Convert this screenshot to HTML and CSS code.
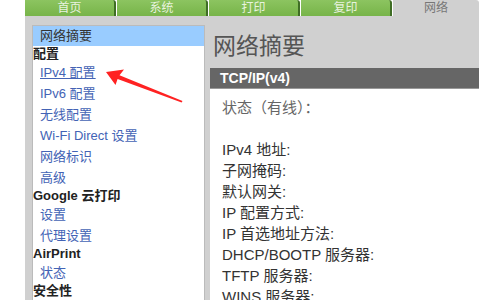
FILE: index.html
```html
<!DOCTYPE html>
<html lang="zh-CN">
<head>
    <meta charset="UTF-8">
    <meta name="viewport" content="width=device-width, initial-scale=1.0">
    <title>网络摘要</title>
    <link rel="stylesheet" href="styles.css">
</head>
<body>
    <div class="page">
        <div class="tabs">
            <div class="tab">首页</div>
            <div class="tab">系统</div>
            <div class="tab">打印</div>
            <div class="tab">复印</div>
            <div class="tab active">网络</div>
        </div>

        <div class="content">
            <div class="sidebar">
                <div class="nav-current">网络摘要</div>
                <div class="nav-head">配置</div>
                <a class="nav-link hover" href="#">IPv4 配置</a>
                <a class="nav-link" href="#">IPv6 配置</a>
                <a class="nav-link" href="#">无线配置</a>
                <a class="nav-link" href="#">Wi-Fi Direct 设置</a>
                <a class="nav-link" href="#">网络标识</a>
                <a class="nav-link" href="#">高级</a>
                <div class="nav-head">Google 云打印</div>
                <a class="nav-link" href="#">设置</a>
                <a class="nav-link" href="#">代理设置</a>
                <div class="nav-head">AirPrint</div>
                <a class="nav-link" href="#">状态</a>
                <div class="nav-head">安全性</div>
                <a class="nav-link" href="#">设置</a>
            </div>

            <div class="main">
                <h1 class="title">网络摘要</h1>
                <div class="section-bar">TCP/IP(v4)</div>
                <div class="panel">
                    <div class="row muted">状态（有线）：</div>
                    <div class="row">&nbsp;</div>
                    <div class="row">IPv4 地址:</div>
                    <div class="row">子网掩码:</div>
                    <div class="row">默认网关:</div>
                    <div class="row">IP 配置方式:</div>
                    <div class="row">IP 首选地址方法:</div>
                    <div class="row">DHCP/BOOTP 服务器:</div>
                    <div class="row">TFTP 服务器:</div>
                    <div class="row">WINS 服务器:</div>
                </div>
            </div>
        </div>
    </div>

    <!-- annotation arrow pointing at the IPv4 link -->
    <svg class="arrow" width="500" height="300" viewBox="0 0 500 300">
        <polygon points="106,72 124,69.5 119.5,75.2 182.5,101 181.6,102.6 117.6,79 115.5,85" fill="#f22"/>
    </svg>
</body>
</html>
```

FILE: styles.css
```css
body { margin: 0; background: #fff; font-family: "Liberation Sans", "Noto Sans CJK SC", sans-serif; overflow: hidden; }
.page { margin-left: 25px; width: 454px; height: 300px; background: #d0d0d0; overflow: hidden; }

.tabs { display: flex; height: 16px; background: #fff; }
.tab {
    width: 89px;
    margin-right: 1px;
    background: linear-gradient(#8cc460, #77b449);
    border-right: 2px solid #3f6d25;
    border-top-right-radius: 3px;
    color: #e8f3df;
    font-size: 12px;
    line-height: 16px;
    text-align: center;
}
.tab.active { flex: 1; margin: 0; border: none; background: #d0d0d0; color: #777; }

.content { display: flex; gap: 5px; padding: 9px 0 0 7px; }

.sidebar { width: 173px; box-sizing: border-box; height: 290px; background: #fff; border: 1px solid #bbb; font-size: 13px; }
.nav-current { height: 20px; line-height: 20px; padding-left: 7px; background: #99ccff; color: #333; }
.nav-head { line-height: 16px; font-weight: bold; color: #222; }
.nav-link { display: block; line-height: 21px; padding-left: 7px; color: #4363b5; text-decoration: none; }
.nav-link.hover { text-decoration: underline; }

.main { flex: 1; }
.title { margin: 0; height: 43px; line-height: 43px; padding-left: 3px; font-size: 23px; font-weight: normal; color: #555; }
.section-bar { height: 21px; line-height: 21px; padding-left: 10px; background: #666; color: #fff; font-size: 14px; font-weight: bold; border-bottom: 1px solid #999; box-sizing: border-box; }
.panel { background: #fff; padding: 8px 0 0 12px; height: 220px; font-size: 15px; color: #333; }
.row { line-height: 21px; }
.row.muted { color: #666; }

.arrow { position: absolute; left: 0; top: 0; pointer-events: none; }
```
